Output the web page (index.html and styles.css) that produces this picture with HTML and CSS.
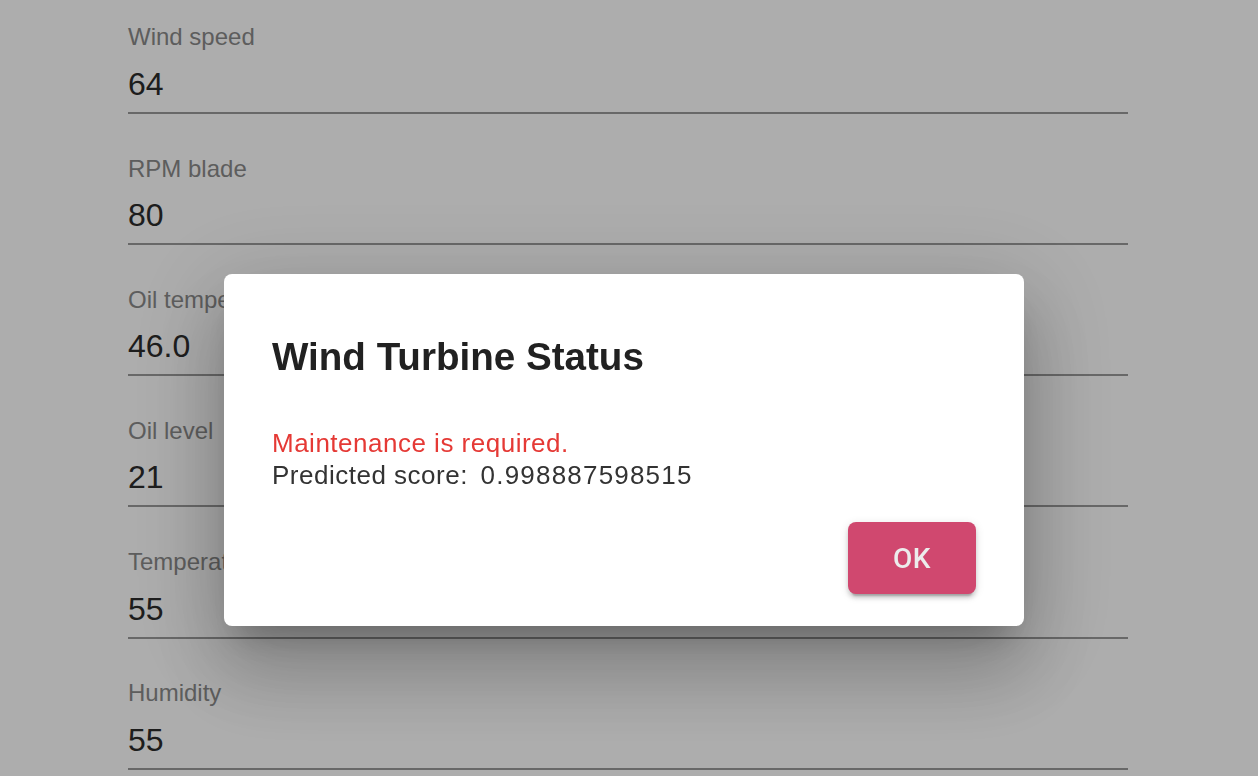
FILE: index.html
```html
<!DOCTYPE html>
<html lang="en">
<head>
<meta charset="utf-8">
<title>Wind Turbine</title>
<link rel="stylesheet" href="styles.css">
</head>
<body>
<main class="form">
  <div class="field"><label class="field-label">Wind speed</label><div class="field-value">64</div></div>
  <div class="field"><label class="field-label">RPM blade</label><div class="field-value">80</div></div>
  <div class="field"><label class="field-label">Oil temperature</label><div class="field-value">46.0</div></div>
  <div class="field"><label class="field-label">Oil level</label><div class="field-value">21</div></div>
  <div class="field"><label class="field-label">Temperature</label><div class="field-value">55</div></div>
  <div class="field"><label class="field-label">Humidity</label><div class="field-value">55</div></div>
</main>
<div class="overlay">
  <div class="dialog" role="dialog">
    <h2 class="dialog-title">Wind Turbine Status</h2>
    <div class="dialog-content">
      <p class="alert">Maintenance is required.</p>
      <p class="score">Predicted score: <span class="score-value">0.998887598515</span></p>
    </div>
    <div class="dialog-actions">
      <button class="btn-ok">OK</button>
    </div>
  </div>
</div>
</body>
</html>
```
FILE: styles.css
```css
html, body {
  margin: 0;
  padding: 0;
  height: 100%;
  overflow: hidden;
}
body {
  background: #ffffff;
  font-family: "Liberation Sans", Arial, Helvetica, sans-serif;
}
.form {
  width: 1000px;
  margin-left: 128px;
  padding-top: 23.4px;
  display: flex;
  flex-direction: column;
  gap: 40.7px;
}
.field {
  display: flex;
  flex-direction: column;
  border-bottom: 2px solid #9a9a9a;
  padding-bottom: 8px;
}
.field-label {
  font-size: 24px;
  line-height: 28px;
  color: #8a8a8a;
  margin-bottom: 12.5px;
}
.field-value {
  font-size: 32px;
  line-height: 40px;
  color: #2c2c2c;
}
.overlay {
  position: fixed;
  inset: 0;
  background: rgba(0, 0, 0, 0.32);
}
.dialog {
  position: absolute;
  left: 224px;
  top: 274px;
  width: 800px;
  box-sizing: border-box;
  padding: 51px 48px 32px;
  background: #ffffff;
  border-radius: 8px;
  box-shadow: 0 22px 30px -14px rgba(0, 0, 0, 0.22),
              0 48px 76px 6px rgba(0, 0, 0, 0.16),
              0 18px 92px 16px rgba(0, 0, 0, 0.14);
}
.dialog-title {
  margin: 0 0 38px;
  font-size: 38.6px;
  line-height: 64px;
  font-weight: bold;
  color: #212121;
}
.dialog-content p {
  margin: 0;
  line-height: 32px;
}
.alert {
  font-size: 26px;
  letter-spacing: 0.5px;
  color: #e53935;
}
.score {
  font-size: 26px;
  letter-spacing: 0.5px;
  color: #333333;
}
.score-value {
  margin-left: 5px;
  letter-spacing: 1.2px;
}
.dialog-actions {
  margin-top: 31px;
  display: flex;
  justify-content: flex-end;
}
.btn-ok {
  width: 128px;
  height: 72px;
  border: none;
  border-radius: 8px;
  background: #d0486f;
  color: #ececec;
  font-family: Roboto, "Liberation Sans", sans-serif;
  font-weight: 500;
  font-size: 28px;
  letter-spacing: 0.5px;
  box-shadow: 0 6px 2px -4px rgba(0, 0, 0, 0.2),
              0 4px 4px 0 rgba(0, 0, 0, 0.14),
              0 2px 10px 0 rgba(0, 0, 0, 0.12);
  cursor: pointer;
}
```
